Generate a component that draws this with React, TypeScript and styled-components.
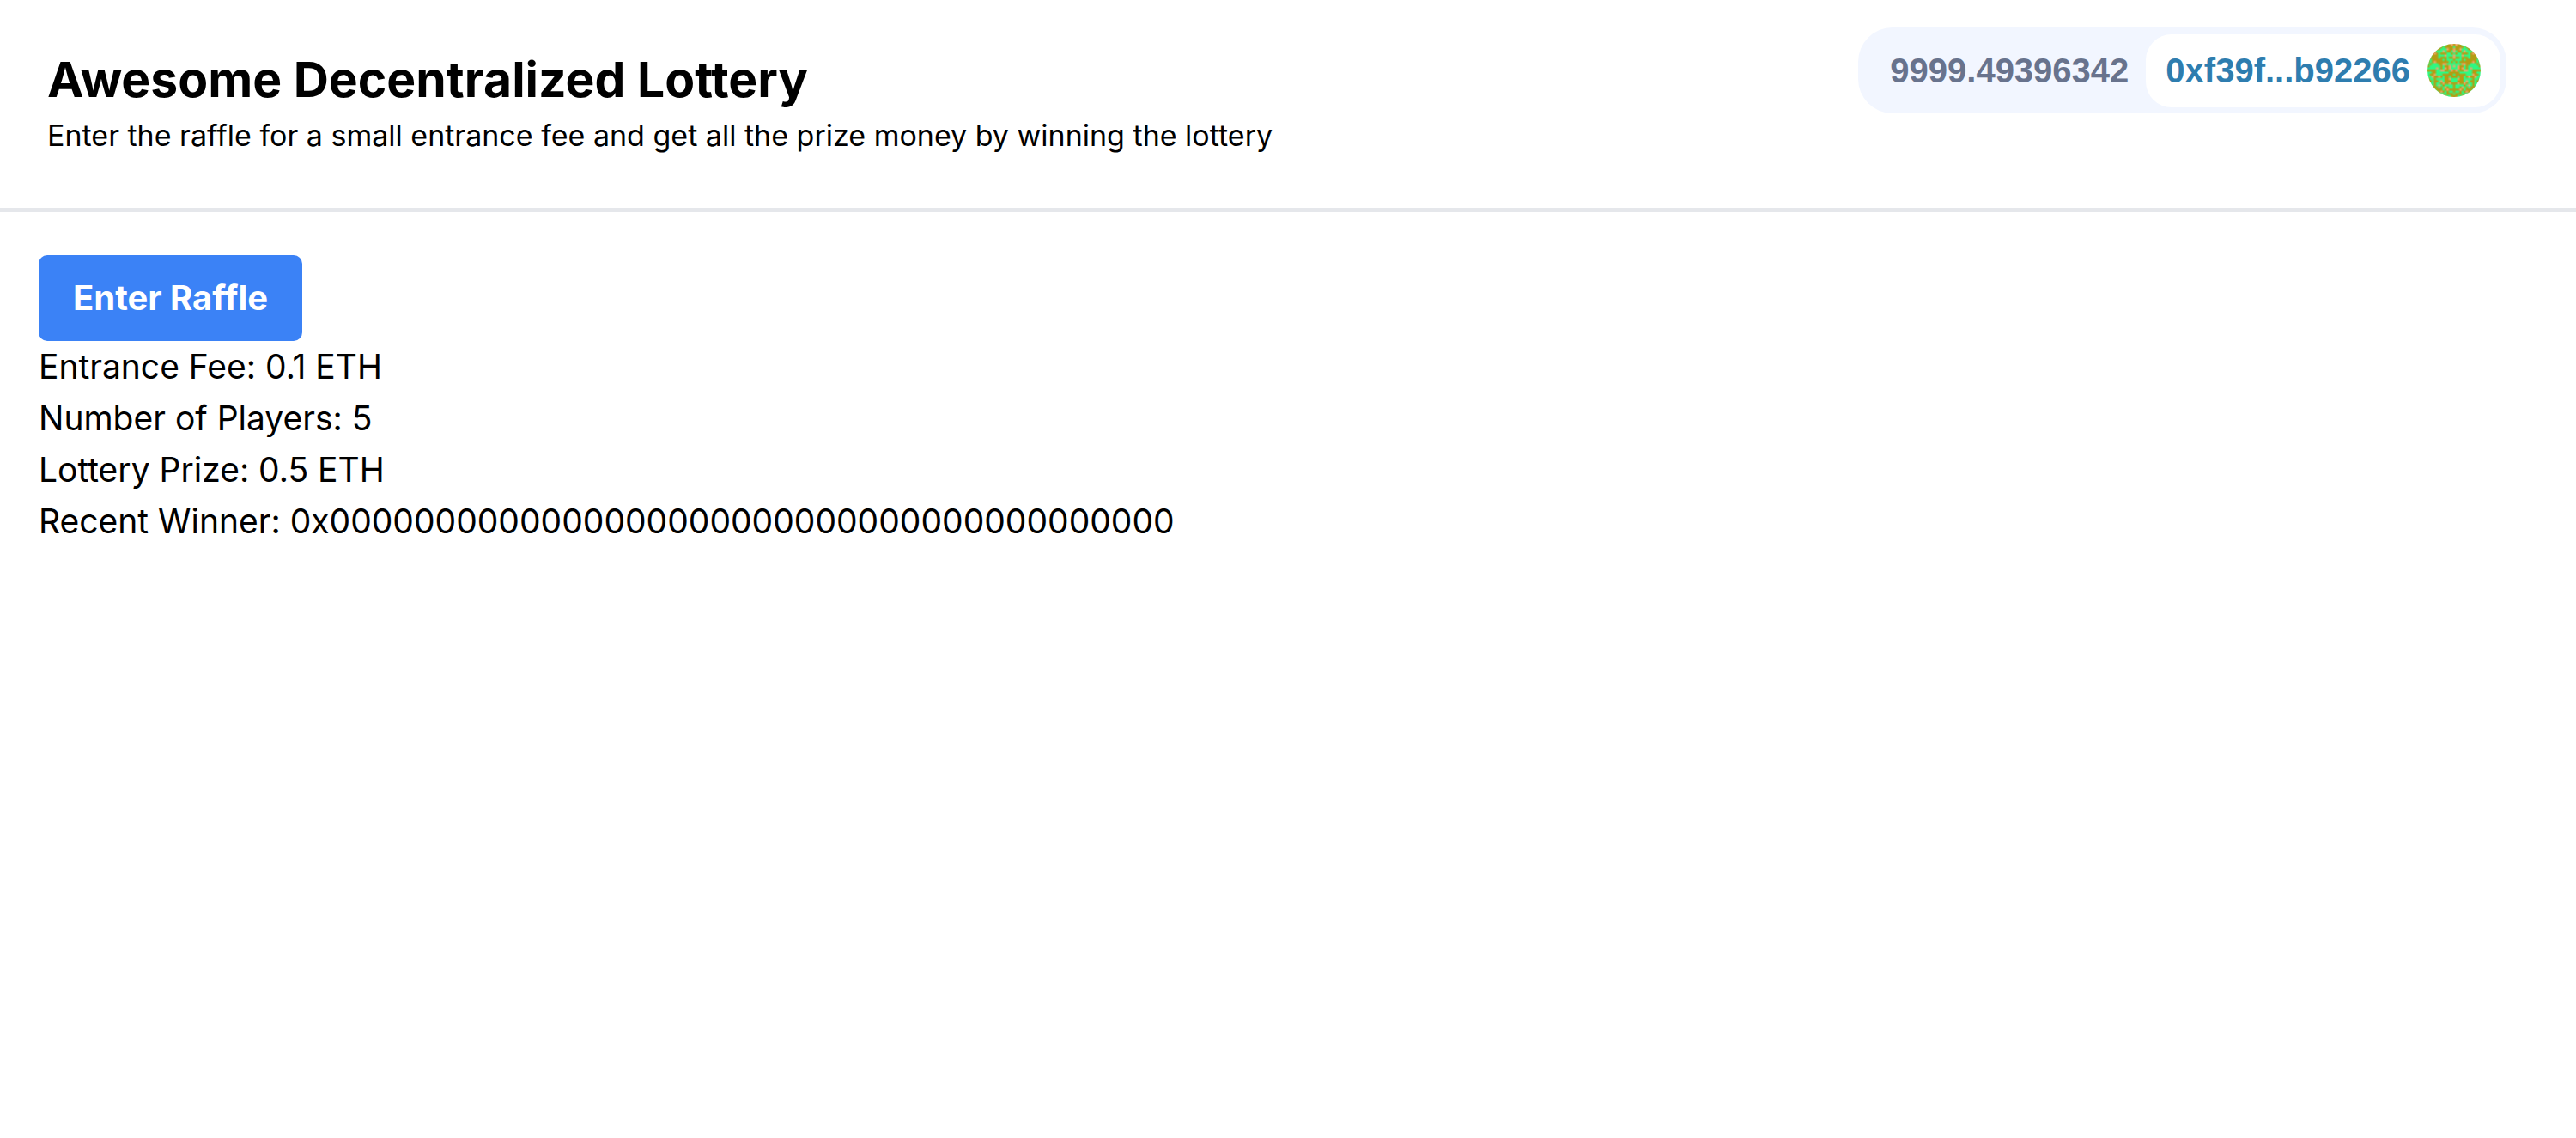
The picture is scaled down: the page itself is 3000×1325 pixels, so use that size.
import React, { useLayoutEffect, useRef } from "react";
import styled, { createGlobalStyle } from "styled-components";

const ACCOUNT = "0xf39fd6e51aad88f6f4ce6ab8827279cfffb92266";
const BALANCE = "9999.49396342";
const WINNER = `0x${"0".repeat(40)}`;

const GlobalStyle = createGlobalStyle`
  *, *::before, *::after { box-sizing: border-box; }
  body {
    margin: 0;
    background: #fff;
    color: #000;
    font-family: Inter, "Noto Sans", sans-serif;
    font-size: 39px;
    line-height: 60px;
  }
`;

const Header = styled.header`
  display: flex;
  justify-content: space-between;
  align-items: flex-start;
  border-bottom: 5px solid #e5e7eb;
  padding: 32px 81px 59px 55px;
`;

const Intro = styled.div`
  padding-top: 21px;
`;

const Title = styled.h1`
  margin: 0;
  font-size: 57px;
  font-weight: 700;
  line-height: 80px;
`;

const Subtitle = styled.p`
  margin: 0;
  font-size: 34px;
  line-height: 50px;
`;

const Wallet = styled.section`
  display: flex;
  align-items: center;
  height: 100px;
  padding: 0 7px 0 37px;
  border-radius: 40px;
  background: #f2f6ff;
  font-family: "Liberation Sans", Arial, sans-serif;
  font-size: 40px;
  font-weight: 700;
  white-space: nowrap;
`;

const Balance = styled.p`
  margin: 0 20px 0 0;
  color: #68738d;
`;

const Account = styled.button`
  display: flex;
  align-items: center;
  gap: 20px;
  height: 85px;
  padding: 0 23px;
  border: 0;
  border-radius: 30px;
  background: #fff;
  color: #2e7daf;
  font: inherit;
  cursor: pointer;
`;

const Avatar = styled.canvas`
  width: 62px;
  height: 62px;
  border-radius: 50%;
`;

const Raffle = styled.main`
  padding: 50px 45px;
`;

const EnterButton = styled.button`
  display: block;
  padding: 20px 40px;
  border: 0;
  border-radius: 10px;
  background: #3b82f6;
  color: #fff;
  font: inherit;
  font-size: 40px;
  font-weight: 700;
  cursor: pointer;
`;

const Stat = styled.p`
  margin: 0;
  overflow-wrap: anywhere;
`;

/** Builds the mirrored three-colour pattern that belongs to an address. */
function blockie(seed: string, size: number) {
  const state = [0, 0, 0, 0];
  for (let i = 0; i < seed.length; i++) {
    state[i % 4] = (state[i % 4] << 5) - state[i % 4] + seed.charCodeAt(i);
  }
  const rand = () => {
    const t = state[0] ^ (state[0] << 11);
    state[0] = state[1];
    state[1] = state[2];
    state[2] = state[3];
    state[3] = state[3] ^ (state[3] >> 19) ^ t ^ (t >> 8);
    return (state[3] >>> 0) / ((1 << 31) >>> 0);
  };
  const color = () => {
    const h = Math.floor(rand() * 360);
    const s = rand() * 60 + 40;
    const l = (rand() + rand() + rand() + rand()) * 25;
    return `hsl(${h}, ${s}%, ${l}%)`;
  };
  const foreground = color();
  const background = color();
  const spot = color();
  const half = Math.ceil(size / 2);
  const rows: number[][] = [];
  for (let y = 0; y < size; y++) {
    const row: number[] = [];
    for (let x = 0; x < half; x++) row.push(Math.floor(rand() * 2.3));
    rows.push(row.concat(row.slice(0, size - half).reverse()));
  }
  return { palette: [background, foreground, spot], rows };
}

function Identicon({ seed, size }: { seed: string; size: number }) {
  const ref = useRef<HTMLCanvasElement>(null);
  useLayoutEffect(() => {
    const ctx = ref.current?.getContext("2d");
    if (!ctx) return;
    const { palette, rows } = blockie(seed, size);
    rows.forEach((row, y) =>
      row.forEach((cell, x) => {
        ctx.fillStyle = palette[cell];
        ctx.fillRect(x, y, 1, 1);
      })
    );
  }, [seed, size]);
  return <Avatar ref={ref} width={size} height={size} aria-hidden="true" />;
}

export default function App() {
  return (
    <>
      <GlobalStyle />
      <Header>
        <Intro>
          <Title>Awesome Decentralized Lottery</Title>
          <Subtitle>
            Enter the raffle for a small entrance fee and get all the prize money by winning the lottery
          </Subtitle>
        </Intro>
        <Wallet>
          <Balance>{BALANCE}</Balance>
          <Account type="button">
            {`${ACCOUNT.slice(0, 6)}...${ACCOUNT.slice(-6)}`}
            <Identicon seed={ACCOUNT} size={25} />
          </Account>
        </Wallet>
      </Header>
      <Raffle>
        <EnterButton type="button">Enter Raffle</EnterButton>
        <Stat>Entrance Fee: 0.1 ETH</Stat>
        <Stat>Number of Players: 5</Stat>
        <Stat>Lottery Prize: 0.5 ETH</Stat>
        <Stat>Recent Winner: {WINNER}</Stat>
      </Raffle>
    </>
  );
}
